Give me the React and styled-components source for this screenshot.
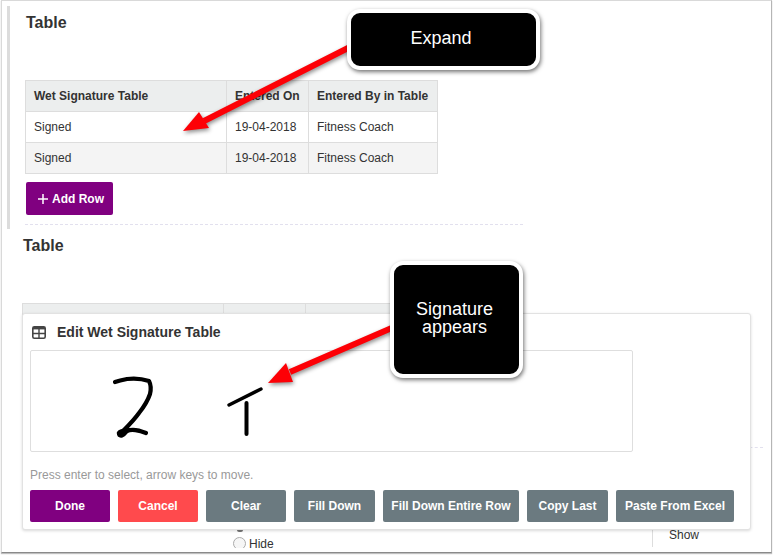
import React from "react";
import styled, { createGlobalStyle } from "styled-components";

const GlobalStyle = createGlobalStyle`
  html, body {
    margin: 0;
    padding: 0;
    background: #fff;
  }
  body {
    font-family: "Liberation Sans", Arial, sans-serif;
    color: #333;
  }
`;

const Shot = styled.div`
  position: relative;
  width: 773px;
  height: 555px;
  overflow: hidden;
  background: #fff;
`;

const Frame = styled.div`
  box-sizing: border-box;
  width: 771px;
  height: 553px;
  margin-left: 1px;
  border: 1px solid #d9d9d9;
  border-bottom-color: #8a8a8a;
  border-right-color: #b5b5b5;
  box-shadow: 0 1px 1px rgba(0, 0, 0, 0.25);
  overflow: hidden;
  padding: 5px 0 0 5px;
`;

const FirstSection = styled.section`
  width: 515px;
  height: 223px;
  border-left: 3px solid #dcdcdc;
  padding: 7px 0 0 15px;
  box-sizing: border-box;
  display: flex;
  flex-direction: column;
  align-items: flex-start;
`;

const Heading = styled.h3`
  margin: 0;
  font-size: 16px;
  line-height: 20px;
  font-weight: 700;
  color: #333;
`;

const FirstHeading = styled(Heading)`
  margin-left: 1px;
`;

const Grid = styled.table`
  border-collapse: collapse;
  table-layout: fixed;
  width: 412px;
  font-size: 12px;
  color: #333;

  th, td {
    border: 1px solid #dddddd;
    height: 31px;
    padding: 0 8px;
    text-align: left;
    box-sizing: border-box;
    white-space: nowrap;
  }
  th {
    background: #eceeee;
    font-weight: 700;
  }
  tbody tr:nth-child(even) td {
    background: #f4f4f4;
  }
`;

const FirstGrid = styled(Grid)`
  margin-top: 47px;
`;

const AddRow = styled.button`
  display: flex;
  align-items: center;
  gap: 3px;
  width: 87px;
  height: 33px;
  margin: 8px 0 0 1px;
  padding: 0 0 0 11px;
  border: 0;
  border-radius: 2px;
  background: #800080;
  color: #fff;
  font: 700 12px "Liberation Sans", Arial, sans-serif;
`;

const Rule = styled.div`
  border-top: 1px dashed #e2e0ee;
`;

const FirstRule = styled(Rule)`
  width: 498px;
  margin-top: 9px;
`;

const SecondSection = styled.section`
  position: relative;
  height: 325px;
  padding: 7px 0 0 16px;
  box-sizing: border-box;
`;

const BehindGrid = styled(Grid)`
  position: absolute;
  left: 15px;
  top: 74px;
`;

const BehindRule = styled(Rule)`
  position: absolute;
  right: 8px;
  top: 218px;
  width: 40px;
`;

const ShowCol = styled.div`
  position: absolute;
  left: 645px;
  top: 291px;
  height: 19px;
  border-left: 1px solid #ddd;
  padding: 8px 0 0 16px;
  font-size: 12px;
  line-height: 14px;
  color: #333;
`;

const HideOption = styled.div`
  position: absolute;
  left: 226px;
  top: 308px;
  height: 11px;
  overflow: hidden;
  display: flex;
  align-items: flex-start;
  gap: 3px;
  font-size: 12px;
  line-height: 14px;
  color: #333;
`;

const RadioDot = styled.span`
  box-sizing: border-box;
  width: 13px;
  height: 13px;
  border: 1px solid #aaa;
  border-radius: 50%;
  background: #f6f6f6;
`;

const RadioTop = styled.span`
  position: absolute;
  left: 230px;
  top: 301px;
  width: 6px;
  height: 2px;
  border-radius: 0 0 4px 4px;
  background: #777;
`;

const EditCard = styled.div`
  position: absolute;
  left: 22px;
  top: 313px;
  width: 729px;
  height: 217px;
  box-sizing: border-box;
  background: #fff;
  border: 1px solid #e2e2e2;
  border-radius: 3px;
  box-shadow: 0 1px 3px rgba(0, 0, 0, 0.15);
  padding: 0 7px;
  display: flex;
  flex-direction: column;
`;

const CardTitle = styled.div`
  display: flex;
  align-items: center;
  gap: 11px;
  height: 36px;
  padding-left: 2px;
  font-size: 14px;
  font-weight: 700;
  color: #333;
`;

const SignatureBox = styled.div`
  box-sizing: border-box;
  width: 603px;
  height: 102px;
  border: 1px solid #dedede;
  border-radius: 2px;
  background: #fff;
`;

const Hint = styled.div`
  margin-top: 15px;
  font-size: 12px;
  line-height: 16px;
  color: #999;
`;

const ButtonRow = styled.div`
  display: flex;
  gap: 8px;
  margin-top: 7px;
`;

const ActionButton = styled.button`
  height: 32px;
  width: ${(p) => p.$w || 80}px;
  padding: 0;
  border: 0;
  border-radius: 2px;
  background: ${(p) => p.$bg || "#6b7a80"};
  color: #fff;
  font: 700 12px "Liberation Sans", Arial, sans-serif;
  white-space: nowrap;
`;

const Callout = styled.div`
  position: absolute;
  box-sizing: content-box;
  background: #000;
  color: #fff;
  border: 4px solid #fff;
  border-radius: 13px;
  box-shadow: 1px 2px 4px rgba(0, 0, 0, 0.55);
  font-size: 18px;
  line-height: 18px;
  text-align: center;
`;

const ExpandCallout = styled(Callout)`
  left: 347px;
  top: 9px;
  width: 180px;
  height: 53px;
  padding-right: 5px;
  line-height: 50px;
`;

const SignatureCallout = styled(Callout)`
  left: 390px;
  top: 261px;
  width: 121px;
  height: 74px;
  padding: 35px 4px 0 0;
`;

const DrawingLayer = styled.svg`
  position: absolute;
  left: 0;
  top: 0;
  pointer-events: none;
`;

const ArrowLayer = styled(DrawingLayer)`
  filter: drop-shadow(1px 2px 2px rgba(0, 0, 0, 0.45));
`;

const rows = [
  { sig: "Signed", on: "19-04-2018", by: "Fitness Coach" },
  { sig: "Signed", on: "19-04-2018", by: "Fitness Coach" },
];

function Columns() {
  return (
    <colgroup>
      <col width="201" />
      <col width="82" />
      <col width="129" />
    </colgroup>
  );
}

function TableIcon() {
  return (
    <svg width="14" height="13" viewBox="0 0 14 13">
      <rect x="0.8" y="0.8" width="12.4" height="11.4" rx="1.5" fill="none" stroke="#444" strokeWidth="1.6" />
      <rect x="1" y="1" width="12" height="2.4" fill="#444" />
      <path d="M7 3v9M1 7.5h12" stroke="#444" strokeWidth="1.4" />
    </svg>
  );
}

function PlusIcon() {
  return (
    <svg width="12" height="12" viewBox="0 0 12 12">
      <path d="M6 1v10M1 6h10" stroke="#fff" strokeWidth="1.5" />
    </svg>
  );
}

export default function App() {
  return (
    <Shot>
      <GlobalStyle />
      <Frame>
        <FirstSection>
          <FirstHeading>Table</FirstHeading>
          <FirstGrid>
            <Columns />
            <thead>
              <tr>
                <th>Wet Signature Table</th>
                <th>Entered On</th>
                <th>Entered By in Table</th>
              </tr>
            </thead>
            <tbody>
              {rows.map((r, i) => (
                <tr key={i}>
                  <td>{r.sig}</td>
                  <td>{r.on}</td>
                  <td>{r.by}</td>
                </tr>
              ))}
            </tbody>
          </FirstGrid>
          <AddRow>
            <PlusIcon />
            Add Row
          </AddRow>
          <FirstRule />
        </FirstSection>
        <SecondSection>
          <Heading>Table</Heading>
          <BehindGrid>
            <Columns />
            <thead>
              <tr>
                <th />
                <th />
                <th />
              </tr>
            </thead>
          </BehindGrid>
          <BehindRule />
          <ShowCol>Show</ShowCol>
          <RadioTop />
          <HideOption>
            <RadioDot />
            Hide
          </HideOption>
        </SecondSection>
      </Frame>

      <EditCard>
        <CardTitle>
          <TableIcon />
          Edit Wet Signature Table
        </CardTitle>
        <SignatureBox />
        <Hint>Press enter to select, arrow keys to move.</Hint>
        <ButtonRow>
          <ActionButton $bg="#800080">Done</ActionButton>
          <ActionButton $bg="#ff4a4d">Cancel</ActionButton>
          <ActionButton>Clear</ActionButton>
          <ActionButton $w={81}>Fill Down</ActionButton>
          <ActionButton $w={136}>Fill Down Entire Row</ActionButton>
          <ActionButton $w={81}>Copy Last</ActionButton>
          <ActionButton $w={118}>Paste From Excel</ActionButton>
        </ButtonRow>
      </EditCard>

      {/* handwriting inside the signature box */}
      <DrawingLayer width="773" height="555">
        <g fill="none" stroke="#000" strokeLinecap="round" strokeLinejoin="round">
          <path
            d="M115 382 C118 381 122 380 127 379 C135 378 143 379 149 381 C151 385 151 390 150 394 C147 403 143 408 139 413 C134 420 129 425 124 430 C121 432 118 432 119 434 C120 437 123 436 127 431 C131 429 139 430 146 433"
            strokeWidth="4.2"
          />
          <path d="M229 405 L261 389" strokeWidth="3.4" />
          <path d="M246.500 403 L246.500 434" strokeWidth="4" />
        </g>
      </DrawingLayer>

      <ArrowLayer width="773" height="555">
        <path d="M350 47 L204 121 M394 327 L290 372" stroke="#fd0006" strokeWidth="6" />
        <path d="M183 131 L199 112 L209 128 Z" fill="#fd0006" />
        <path d="M268 383 L286 363 L293 382 Z" fill="#fd0006" />
      </ArrowLayer>

      <ExpandCallout>Expand</ExpandCallout>
      <SignatureCallout>
        Signature
        <br />
        appears
      </SignatureCallout>
    </Shot>
  );
}
